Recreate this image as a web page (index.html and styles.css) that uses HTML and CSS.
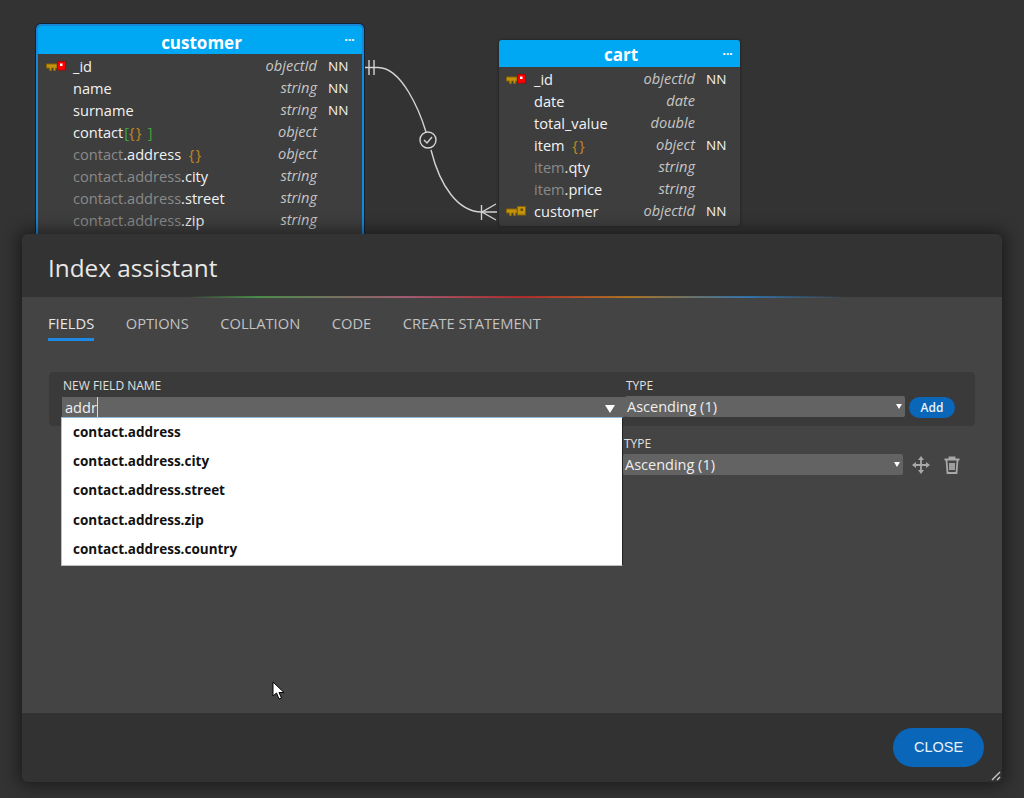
FILE: index.html
```html
<!DOCTYPE html>
<html lang="en">
<head>
<meta charset="utf-8">
<title>Index assistant</title>
<link rel="stylesheet" href="styles.css">
</head>
<body>
<main class="canvas">
  <svg class="links" width="1024" height="240" viewBox="0 0 1024 240" fill="none">
    <path class="line" d="M364 67.500H378C402 67.500 420 112 426 132M431 150C440 186 458 212 482 212H497"/>
    <path class="line" d="M369 60V75M374 60V75"/>
    <path class="line" d="M481.500 205V220M496 204L482 212L496 220"/>
    <circle class="line" cx="428" cy="140" r="8"/>
    <path class="line" d="M424 140L427 143L432 137"/>
  </svg>

  <section class="table table-customer selected">
    <header class="table-head"><span class="title">customer</span><i class="dots">•••</i></header>
    <div class="row"><span class="key"><svg width="20" height="10" viewBox="0 0 20 10"><path class="key-gold" d="M.5 3H11V7H9.500V9.500H7.500V7H5.500V9.500H3.500V7H.5Z"/><rect class="key-red" x="11.500" y=".5" width="8" height="8.500"/><rect class="key-dot" x="14" y="2.500" width="2.500" height="2.500"/></svg></span><span class="name">_id</span><span class="type">objectId</span><span class="nn">NN</span></div>
    <div class="row"><span class="key"></span><span class="name">name</span><span class="type">string</span><span class="nn">NN</span></div>
    <div class="row"><span class="key"></span><span class="name">surname</span><span class="type">string</span><span class="nn">NN</span></div>
    <div class="row"><span class="key"></span><span class="name">contact<b class="green">[</b><b class="brace">{}</b><b class="green"> ]</b></span><span class="type">object</span><span class="nn"></span></div>
    <div class="row"><span class="key"></span><span class="name"><em>contact</em>.address  <b class="brace">{}</b></span><span class="type">object</span><span class="nn"></span></div>
    <div class="row"><span class="key"></span><span class="name"><em>contact.address</em>.city</span><span class="type">string</span><span class="nn"></span></div>
    <div class="row"><span class="key"></span><span class="name"><em>contact.address</em>.street</span><span class="type">string</span><span class="nn"></span></div>
    <div class="row"><span class="key"></span><span class="name"><em>contact.address</em>.zip</span><span class="type">string</span><span class="nn"></span></div>
  </section>

  <section class="table table-cart">
    <header class="table-head"><span class="title">cart</span><i class="dots">•••</i></header>
    <div class="row"><span class="key"><svg width="20" height="10" viewBox="0 0 20 10"><path class="key-gold" d="M.5 3H11V7H9.500V9.500H7.500V7H5.500V9.500H3.500V7H.5Z"/><rect class="key-red" x="11.500" y=".5" width="8" height="8.500"/><rect class="key-dot" x="14" y="2.500" width="2.500" height="2.500"/></svg></span><span class="name">_id</span><span class="type">objectId</span><span class="nn">NN</span></div>
    <div class="row"><span class="key"></span><span class="name">date</span><span class="type">date</span><span class="nn"></span></div>
    <div class="row"><span class="key"></span><span class="name">total_value</span><span class="type">double</span><span class="nn"></span></div>
    <div class="row"><span class="key"></span><span class="name">item  <b class="brace">{}</b></span><span class="type">object</span><span class="nn">NN</span></div>
    <div class="row"><span class="key"></span><span class="name"><em>item</em>.qty</span><span class="type">string</span><span class="nn"></span></div>
    <div class="row"><span class="key"></span><span class="name"><em>item</em>.price</span><span class="type">string</span><span class="nn"></span></div>
    <div class="row"><span class="key"><svg width="20" height="10" viewBox="0 0 20 10"><path class="key-gold" d="M.5 3H11V7H9.500V9.500H7.500V7H5.500V9.500H3.500V7H.5Z"/><rect class="key-gold" x="11.500" y=".5" width="8" height="8.500"/><rect class="key-hole" x="14.500" y="2.500" width="2.500" height="2.500"/></svg></span><span class="name">customer</span><span class="type">objectId</span><span class="nn">NN</span></div>
  </section>
</main>

<div class="modal" role="dialog" aria-label="Index assistant">
  <header class="modal-head"><h1>Index assistant</h1></header>
  <div class="modal-body">
    <div class="rainbow"></div>
    <nav class="tabs">
      <a class="tab active">FIELDS</a>
      <a class="tab">OPTIONS</a>
      <a class="tab">COLLATION</a>
      <a class="tab">CODE</a>
      <a class="tab">CREATE STATEMENT</a>
    </nav>
    <div class="new-field">
      <div class="col-name">
        <label class="label">NEW FIELD NAME</label>
        <div class="input"><span>addr</span><i class="caret"></i><span class="arrow-big"></span></div>
        <ul class="suggest">
          <li>contact.address</li>
          <li>contact.address.city</li>
          <li>contact.address.street</li>
          <li>contact.address.zip</li>
          <li>contact.address.country</li>
        </ul>
      </div>
      <div class="col-type">
        <label class="label">TYPE</label>
        <div class="select"><span>Ascending (1)</span><span class="arrow-small"></span></div>
      </div>
      <button class="add">Add</button>
    </div>
    <div class="field-row">
      <div class="col-type">
        <label class="label">TYPE</label>
        <div class="select"><span>Ascending (1)</span><span class="arrow-small"></span></div>
      </div>
      <svg class="icon" width="20" height="20" viewBox="0 0 20 20" fill="none"><path class="tool" d="M10 3V17M3 10H17"/><path class="tool-fill" d="M10 1L13 5H7ZM10 19L7 15H13ZM1 10L5 7V13ZM19 10L15 13V7Z"/></svg>
      <svg class="icon trash" width="18" height="20" viewBox="0 0 18 20" fill="none"><path class="tool" d="M1.500 4.500H16.500M6.500 4V2.500H11.500V4M3.500 5L4.500 18H13.500L14.500 5M7 8V15M9 8V15M11 8V15"/></svg>
    </div>
    <svg class="cursor" width="14" height="20" viewBox="0 0 14 20"><path d="M1 1V15L4.500 12L7 18L9.500 17L7 11.500H12Z"/></svg>
  </div>
  <footer class="modal-foot">
    <button class="close">CLOSE</button>
    <svg class="grip" width="10" height="10" viewBox="0 0 10 10"><path d="M1 9L9 1M6 9L9 6"/></svg>
  </footer>
</div>
</body>
</html>
```
FILE: styles.css
```css
* { box-sizing: border-box; }
html, body { margin: 0; height: 100%; }
body {
  position: relative;
  width: 1024px;
  height: 798px;
  overflow: hidden;
  background: #333333;
  font-family: "Open Sans", "Noto Sans", sans-serif;
  color: #fff;
}
.canvas { position: absolute; inset: 0 0 auto 0; height: 240px; }
.links { position: absolute; left: 0; top: 0; }
.line { stroke: #d4d4d4; stroke-width: 1.4; fill: none; }

.table {
  position: absolute;
  background: #3e3e3e;
  border-radius: 3px;
  box-shadow: 0 0 3px rgba(0,0,0,.5);
  overflow: hidden;
}
.table-customer { left: 38px; top: 26px; width: 324px; height: 220px; }
.table-customer.selected { box-shadow: 0 0 0 2px #1a86d8, 0 0 0 3px #123; }
.table-cart { left: 499px; top: 40px; width: 241px; height: 186px; }
.table-head {
  position: relative;
  height: 28px;
  background: #00a8f4;
  text-align: center;
  font-size: 17px;
  font-weight: 700;
  line-height: 33px;
  margin-bottom: 1px;
}
.title { padding-left: 3px; }
.table-cart .table-head { height: 27px; margin-bottom: 1px; line-height: 30px; }
.dots {
  position: absolute;
  right: 7px;
  top: 0;
  font: 400 8px/28px "Liberation Sans", sans-serif;
  letter-spacing: .6px;
}
.row {
  display: flex;
  align-items: center;
  height: 22px;
  font-size: 14.600px;
  color: #f2f2f2;
}
.key { width: 35px; padding-left: 8px; display: flex; align-items: center; flex: none; }
.table-cart .key { padding-left: 7px; }
.name { flex: 1; white-space: pre; }
.name em { font-style: normal; color: #8a8a8a; }
.name b { font-weight: 400; }
.green { color: #3da53d; padding-left: 1px; }
.brace { color: #c48a1f; letter-spacing: 1.500px; }
.type { font-style: italic; color: #c6c6c6; margin-bottom: 2px; }
.nn { width: 45px; padding-left: 11px; flex: none; font-size: 13.500px; }
.key-gold { fill: #c2930c; stroke: #8a6400; stroke-width: 1; }
.key-red { fill: #f00; stroke: #b80000; stroke-width: 1; }
.key-dot { fill: #fff; }
.key-hole { fill: #6a4e00; }

.modal {
  position: absolute;
  left: 22px;
  top: 234px;
  width: 980px;
  height: 548px;
  border-radius: 6px;
  overflow: hidden;
  background: #323232;
  box-shadow: 0 0 16px 4px rgba(0,0,0,.45);
  display: flex;
  flex-direction: column;
}
.modal-head { height: 63px; flex: none; background: #333333; padding: 17px 26px 0; }
.modal-head h1 { margin: 0; font-size: 24.300px; font-weight: 400; line-height: 33px; color: #e8e8e8; }
.modal-body {
  position: relative;
  flex: 1;
  background: #444444;
  padding: 0 26px;
}
.rainbow {
  height: 2px;
  margin: -1px -26px 0;
  opacity: .7;
  background: linear-gradient(90deg, transparent 17%, #4fae4f 24%, #c86a8a 39%, #e02424 51%, #d98a18 62%, #2e8ad8 74%, transparent 84%);
}
.tabs { display: flex; gap: 31.500px; height: 44px; padding-top: 15px; }
.tab { display: block; height: 28px; font-size: 14.700px; line-height: 20px; color: #c2c2c2; }
.tab.active { color: #e6e6e6; border-bottom: 3px solid #1e88e5; }
.new-field {
  display: flex;
  margin: 30px 0 0 1px;
  width: 926px;
  height: 54px;
  background: #3a3a3a;
  border-radius: 4px;
  padding: 7px 0 0 13px;
  position: relative;
}
.label { display: block; font-size: 12px; line-height: 14px; color: #e0e0e0; height: 17px; padding-left: 1px; }
.col-name { width: 563px; position: relative; flex: none; }
.input {
  display: flex;
  align-items: center;
  height: 20px;
  margin-top: 1px;
  background: #636363;
  font-size: 14.600px;
  padding-left: 3px;
  color: #f0f0f0;
  position: relative;
}
.caret { display: block; width: 1px; height: 20px; background: #d8d8d8; }
.arrow-big {
  position: absolute;
  right: 10px;
  top: 8px;
  border-left: 5px solid transparent;
  border-right: 5px solid transparent;
  border-top: 8px solid #fff;
}
.suggest {
  position: absolute;
  left: -1px;
  top: 38px;
  width: 562px;
  height: 149px;
  margin: 0;
  padding: 0;
  list-style: none;
  background: #fff;
  border: 1px solid #bdbdbd;
  border-top-color: #8fb6d6;
  border-right-color: #222;
  z-index: 3;
}
.suggest li { height: 29.200px; padding-left: 11px; font-size: 13.500px; font-weight: 700; line-height: 29px; color: #111; }
.col-type { width: 280px; flex: none; }
.select {
  position: relative;
  display: flex;
  align-items: center;
  height: 21px;
  background: #636363;
  border-radius: 2px;
  font-size: 14.500px;
  padding-left: 2px;
  color: #eee;
}
.arrow-small {
  position: absolute;
  right: 3px;
  top: 8px;
  border-left: 3px solid transparent;
  border-right: 3px solid transparent;
  border-top: 5px solid #fff;
}
.add {
  align-self: flex-start;
  margin: 18px 0 0 4px;
  width: 46px;
  height: 21px;
  border: 0;
  border-radius: 11px;
  background: #0a66b8;
  color: #e8f2fa;
  font: 600 12px "Open Sans", sans-serif;
  padding: 0;
}
.field-row {
  display: flex;
  align-items: flex-start;
  margin: 11px 0 0 550px;
  padding-left: 25px;
  width: 400px;
}
.icon { flex: none; margin: 18px 0 0 8px; }
.trash { margin-left: 12px; }
.tool { stroke: #a8a8a8; stroke-width: 1.800; }
.tool-fill { fill: #a8a8a8; }
.cursor { position: absolute; left: 250px; top: 384px; }
.cursor path { fill: #fff; stroke: #000; stroke-width: 1; }
.modal-foot {
  position: relative;
  flex: none;
  height: 69px;
  background: #323232;
  display: flex;
  justify-content: flex-end;
  padding: 15px 18px 0 0;
}
.close {
  width: 91px;
  height: 39px;
  border: 0;
  border-radius: 20px;
  background: #0a66b8;
  color: #e8f2fa;
  font: 400 14.500px "Liberation Sans", Arial, sans-serif;
  padding: 0 0 2px;
}
.grip { position: absolute; right: 1px; bottom: 1px; }
.grip path { stroke: #c8c8c8; stroke-width: 1.400; fill: none; }
```
